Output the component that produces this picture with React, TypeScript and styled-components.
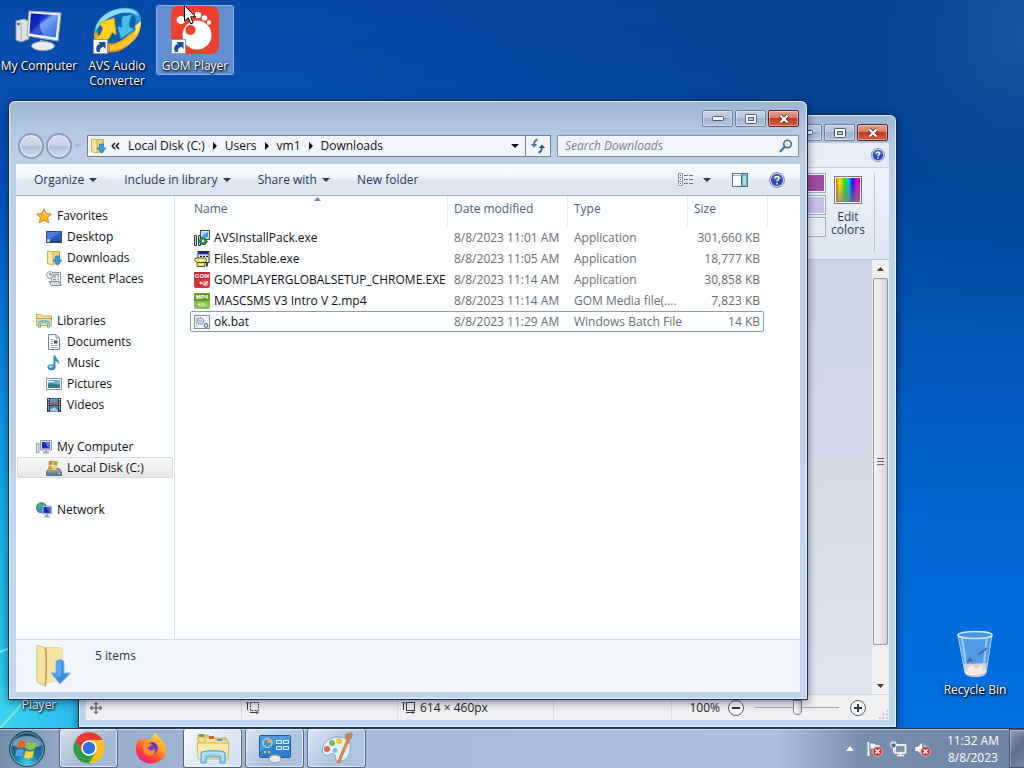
import React from "react";
import styled, { createGlobalStyle, css } from "styled-components";

const App = () => (
    <>
        <GlobalStyle />
        <Screen>
            <Desktop>
                <LightStreaks viewBox="0 0 80 160">
                    <path d="M0 84C30 74 44 56 60 30" fill="none" stroke="#a5f0f6" strokeWidth="2" opacity="0.800" />
                    <path d="M0 160C20 140 36 120 52 90" fill="none" stroke="#a8f0b0" strokeWidth="2" opacity="0.800" />
                    <path d="M0 120C24 108 50 112 80 130V160H0Z" fill="#5fe2ee" opacity="0.250" />
                </LightStreaks>
                <Shortcut $left="1px" $top="6px">
                    <ComputerIcon />
                    <ShortcutLabel>My Computer</ShortcutLabel>
                </Shortcut>
                <Shortcut $left="79px" $top="6px">
                    <AvsIcon />
                    <ShortcutLabel>AVS Audio<br />Converter</ShortcutLabel>
                </Shortcut>
                <Shortcut $left="157px" $top="6px" $selected>
                    <GomIcon />
                    <ShortcutLabel>GOM Player</ShortcutLabel>
                </Shortcut>
                <Shortcut $left="1px" $top="645px">
                    <GomIcon />
                    <ShortcutLabel>Player</ShortcutLabel>
                </Shortcut>
                <Shortcut $right="11px" $top="630px">
                    <RecycleIcon />
                    <ShortcutLabel>Recycle Bin</ShortcutLabel>
                </Shortcut>

                <PaintWindow />
                <ExplorerWindow />
                <Pointer viewBox="0 0 12 20">
                    <path d="M0.500 0.500V16.200L4.200 12.700L6.800 18.800L9.200 17.800L6.700 11.800H11.700Z" fill="#fff" stroke="#000" />
                </Pointer>
            </Desktop>
            <Taskbar />
        </Screen>
    </>
);

export default App;

/* ---------- explorer ---------- */

const navGroups = [
    {
        title: "Favorites",
        icon: <StarIcon />,
        items: [
            { text: "Desktop", icon: <DesktopIcon /> },
            { text: "Downloads", icon: <DownloadsIcon /> },
            { text: "Recent Places", icon: <RecentIcon /> },
        ],
    },
    {
        title: "Libraries",
        icon: <LibrariesIcon />,
        items: [
            { text: "Documents", icon: <DocumentIcon /> },
            { text: "Music", icon: <MusicIcon /> },
            { text: "Pictures", icon: <PictureIcon /> },
            { text: "Videos", icon: <VideoIcon /> },
        ],
    },
    {
        title: "My Computer",
        icon: <SmallComputerIcon />,
        items: [{ text: "Local Disk (C:)", icon: <DiskIcon />, active: true }],
    },
    { title: "Network", icon: <NetworkIcon />, items: [] },
];

const files = [
    { name: "AVSInstallPack.exe", date: "8/8/2023 11:01 AM", type: "Application", size: "301,660 KB", icon: <InstallerIcon /> },
    { name: "Files.Stable.exe", date: "8/8/2023 11:05 AM", type: "Application", size: "18,777 KB", icon: <ArchiveIcon /> },
    { name: "GOMPLAYERGLOBALSETUP_CHROME.EXE", date: "8/8/2023 11:14 AM", type: "Application", size: "30,858 KB", icon: <GomSetupIcon /> },
    { name: "MASCSMS V3 Intro V 2.mp4", date: "8/8/2023 11:14 AM", type: "GOM Media file(....", size: "7,823 KB", icon: <Mp4Icon /> },
    { name: "ok.bat", date: "8/8/2023 11:29 AM", type: "Windows Batch File", size: "14 KB", icon: <BatchIcon />, focused: true },
];

function ExplorerWindow() {
    return (
        <ExplorerFrame>
            <Caption>
                <CaptionButtons />
            </Caption>
            <NavRow>
                <TravelButtons>
                    <TravelButton aria-label="Back" />
                    <TravelButton aria-label="Forward" />
                    <Caret $faded />
                </TravelButtons>
                <AddressBar>
                    <DownloadsIcon />
                    <Chevrons viewBox="0 0 9 8">
                        <path d="M4 1L1.200 4L4 7M8 1L5.200 4L8 7" fill="none" stroke="#111" strokeWidth="1.400" />
                    </Chevrons>
                    {["Local Disk (C:)", "Users", "vm1", "Downloads"].map((crumb, i) => (
                        <React.Fragment key={crumb}>
                            {i > 0 && <CrumbArrow viewBox="0 0 4 8"><path d="M0 0L4 4L0 8Z" fill="#111" /></CrumbArrow>}
                            <Crumb href="#">{crumb}</Crumb>
                        </React.Fragment>
                    ))}
                    <AddressEnd>
                        <AddressButton aria-label="Previous locations"><Caret /></AddressButton>
                        <RefreshButton aria-label="Refresh">
                            <svg width="16" height="16" viewBox="0 0 16 16">
                                <path d="M7.500 1.500C5 2 4 3.500 4 7" fill="none" stroke="#3f78a8" strokeWidth="1.800" />
                                <path d="M0.800 6H7.200L4 9.500Z" fill="#3f78a8" />
                                <path d="M8.500 14.500C11 14 12 12.500 12 9" fill="none" stroke="#2b5674" strokeWidth="1.800" />
                                <path d="M8.800 10H15.200L12 6.500Z" fill="#2b5674" />
                            </svg>
                        </RefreshButton>
                    </AddressEnd>
                </AddressBar>
                <SearchBox>
                    <SearchInput type="text" aria-label="Search Downloads" placeholder="Search Downloads" />
                    <svg width="14" height="14" viewBox="0 0 14 14">
                        <circle cx="8.500" cy="5" r="3.800" fill="#e6f0fa" stroke="#4a6f96" strokeWidth="1.600" />
                        <path d="M5.600 8L1.500 12.300" stroke="#4a6f96" strokeWidth="2.200" strokeLinecap="round" />
                    </svg>
                </SearchBox>
            </NavRow>

            <Toolbar>
                <ToolButton>Organize<Caret $soft /></ToolButton>
                <ToolButton>Include in library<Caret $soft /></ToolButton>
                <ToolButton>Share with<Caret $soft /></ToolButton>
                <ToolButton>New folder</ToolButton>
                <ToolbarEnd>
                    <ToolButton aria-label="Change your view">
                        <svg width="16" height="14" viewBox="0 0 16 14">
                            <path d="M0.500 0.500H4.500V12.500H0.500ZM0.500 4.500H4.500M0.500 8.500H4.500" fill="#fff" stroke="#8a98aa" />
                            <path d="M2 2.500H3M2 6.500H3M2 10.500H3" stroke="#3d5878" />
                            <path d="M6 2.500H10M11 2.500H15M6 6.500H10M11 6.500H15M6 10.500H10M11 10.500H15" stroke="#66788e" />
                        </svg>
                    </ToolButton>
                    <ToolButton aria-label="More options"><Caret $soft /></ToolButton>
                    <ToolButton aria-label="Show the preview pane">
                        <svg width="16" height="14" viewBox="0 0 16 14">
                            <rect x="0.500" y="0.500" width="15" height="13" fill="#fff" stroke="#4c7188" />
                            <path d="M1 2.500H9" stroke="#9bb8c8" />
                            <rect x="9" y="1" width="6" height="12" fill="#6fb5c8" />
                            <rect x="11" y="3" width="3" height="9" fill="#a9dbe4" />
                            <path d="M9.500 1V13" stroke="#4c7188" />
                        </svg>
                    </ToolButton>
                    <ToolButton aria-label="Get help"><HelpIcon /></ToolButton>
                </ToolbarEnd>
            </Toolbar>

            <Body>
                <NavPane aria-label="Folders">
                    {navGroups.map(group => (
                        <NavGroup key={group.title}>
                            <NavItem href="#">{group.icon}{group.title}</NavItem>
                            {group.items.map((item: { text: string; icon: React.ReactNode; active?: boolean }) => (
                                <NavItem href="#" key={item.text} $nested $active={item.active}>
                                    {item.icon}{item.text}
                                </NavItem>
                            ))}
                        </NavGroup>
                    ))}
                </NavPane>
                <FilePane>
                    <FileTable>
                        <colgroup>
                            <Col $width="260px" />
                            <Col $width="120px" />
                            <Col $width="120px" />
                            <Col $width="80px" />
                        </colgroup>
                        <thead>
                            <tr>
                                <HeadCell>
                                    Name
                                    <SortMark viewBox="0 0 7 4"><path d="M0 4L3.500 0L7 4Z" fill="#7b8794" /></SortMark>
                                </HeadCell>
                                <HeadCell>Date modified</HeadCell>
                                <HeadCell>Type</HeadCell>
                                <HeadCell>Size</HeadCell>
                            </tr>
                        </thead>
                        <tbody>
                            {files.map(file => (
                                <FileRow key={file.name} $focused={file.focused}>
                                    <NameCell><FileName>{file.icon}{file.name}</FileName></NameCell>
                                    <Cell>{file.date}</Cell>
                                    <Cell>{file.type}</Cell>
                                    <Cell $right>{file.size}</Cell>
                                </FileRow>
                            ))}
                        </tbody>
                    </FileTable>
                </FilePane>
            </Body>

            <Details>
                <BigFolderIcon />
                <span>5 items</span>
            </Details>
        </ExplorerFrame>
    );
}

/* ---------- paint ---------- */

function PaintWindow() {
    return (
        <PaintFrame>
            <Caption>
                <CaptionButtons />
            </Caption>
            <TabStrip>
                <PlainButton aria-label="Help"><HelpIcon $size="14px" /></PlainButton>
            </TabStrip>
            <Ribbon>
                <Swatches>
                    <Swatch aria-label="Purple" $color="#a349a4" />
                    <Swatch aria-label="Lavender" $color="#c8bfe7" />
                    <Swatch aria-label="Custom color" $color="#e4ecf7" />
                </Swatches>
                <EditColors>
                    <Rainbow />
                    Edit colors
                </EditColors>
                <RibbonDivider />
            </Ribbon>
            <CanvasArea>
                <ScrollBar>
                    <ScrollArrow viewBox="0 0 17 17"><path d="M5 11L8.500 7L12 11Z" fill="#444" /></ScrollArrow>
                    <ScrollThumb>
                        <svg width="7" height="8" viewBox="0 0 7 8">
                            <path d="M0 0.500H7M0 3.500H7M0 6.500H7" stroke="#666" />
                        </svg>
                    </ScrollThumb>
                    <ScrollArrow viewBox="0 0 17 17"><path d="M5 7L8.500 11L12 7Z" fill="#444" /></ScrollArrow>
                </ScrollBar>
            </CanvasArea>
            <StatusBar>
                <StatusCell $width="156px">
                    <svg width="12" height="12" viewBox="0 0 12 12">
                        <path d="M6 0.500V11.500M0.500 6H11.500" stroke="#333b48" />
                        <path d="M4 2.500L6 0.500L8 2.500M4 9.500L6 11.500L8 9.500M2.500 4L0.500 6L2.500 8M9.500 4L11.500 6L9.500 8" fill="none" stroke="#333b48" />
                    </svg>
                </StatusCell>
                <StatusCell $width="156px"><SizeIcon $dashed /></StatusCell>
                <StatusCell $width="156px"><SizeIcon />614 × 460px</StatusCell>
                <StatusCell $width="118px" />
                <ZoomBar>
                    100%
                    <RoundButton aria-label="Zoom out">
                        <svg width="8" height="8" viewBox="0 0 8 8"><path d="M0 4H8" stroke="#333b48" strokeWidth="2" /></svg>
                    </RoundButton>
                    <ZoomSlider type="range" aria-label="Zoom" defaultValue={50} />
                    <RoundButton aria-label="Zoom in">
                        <svg width="8" height="8" viewBox="0 0 8 8"><path d="M0 4H8M4 0V8" stroke="#333b48" strokeWidth="2" /></svg>
                    </RoundButton>
                </ZoomBar>
                <Grip viewBox="0 0 10 10">
                    <path d="M8 0H10V2H8ZM4 4H6V6H4ZM8 4H10V6H8ZM0 8H2V10H0ZM4 8H6V10H4ZM8 8H10V10H8Z" fill="#b8c0cc" />
                </Grip>
            </StatusBar>
        </PaintFrame>
    );
}

function CaptionButtons() {
    return (
        <>
            <CaptionButton aria-label="Minimize">
                <svg width="12" height="5" viewBox="0 0 12 5"><rect x="0.500" y="0.500" width="11" height="4" rx="1" fill="#fff" stroke="#4b5a70" /></svg>
            </CaptionButton>
            <CaptionButton aria-label="Maximize">
                <svg width="12" height="10" viewBox="0 0 12 10">
                    <rect x="0.500" y="0.500" width="11" height="9" rx="1" fill="#fff" stroke="#4b5a70" />
                    <rect x="3.500" y="3.500" width="5" height="3" fill="#b8cade" stroke="#4b5a70" />
                </svg>
            </CaptionButton>
            <CaptionButton aria-label="Close" $close>
                <svg width="12" height="10" viewBox="0 0 12 10">
                    <path d="M2.500 1.500L9.500 8.500M9.500 1.500L2.500 8.500" stroke="#5c2b2b" strokeWidth="4" />
                    <path d="M2.500 1.500L9.500 8.500M9.500 1.500L2.500 8.500" stroke="#fff" strokeWidth="2.400" />
                </svg>
            </CaptionButton>
        </>
    );
}

/* ---------- taskbar ---------- */

function Taskbar() {
    return (
        <Bar>
            <StartButton aria-label="Start"><StartOrb /></StartButton>
            <TaskButton aria-label="Google Chrome" $state="open"><ChromeLogo /></TaskButton>
            <TaskButton aria-label="Firefox" $state="pinned"><FirefoxLogo /></TaskButton>
            <TaskButton aria-label="Windows Explorer" $state="active"><ExplorerLogo /></TaskButton>
            <TaskButton aria-label="Control Panel" $state="open"><ControlPanelLogo /></TaskButton>
            <TaskButton aria-label="Paint" $state="open"><PaintLogo /></TaskButton>
            <Tray>
                <PlainButton aria-label="Show hidden icons">
                    <svg width="8" height="5" viewBox="0 0 8 5"><path d="M0 5L4 0L8 5Z" fill="#fff" /></svg>
                </PlainButton>
                <TrayIcons>
                    <TraySvg viewBox="0 0 17 16">
                        <path d="M2.500 1V15" stroke="#fff" strokeWidth="2" />
                        <path d="M4 2H8L10 3.500H14V9H9L7.500 8H4Z" fill="#e9eef5" stroke="#4a5a70" strokeWidth="0.500" />
                        <TrayError />
                    </TraySvg>
                    <TraySvg viewBox="0 0 17 16">
                        <rect x="5" y="4" width="10.500" height="8" fill="#7d93ae" stroke="#fff" strokeWidth="1.600" />
                        <path d="M7 14.500H14M10.500 12V14.500" stroke="#fff" strokeWidth="1.600" />
                        <path d="M1 2H6V5.500L4.500 7H2.500L1 5.500ZM3.500 7V11H5M2.200 0V2M4.800 0V2" fill="#52657f" stroke="#fff" />
                    </TraySvg>
                    <TraySvg viewBox="0 0 17 16">
                        <path d="M1 5.500H4L8.500 1V15L4 10.500H1Z" fill="#fff" stroke="#5d6d82" strokeWidth="0.500" />
                        <path d="M10.500 4C12 6 12 8 11 10" fill="none" stroke="#fff" />
                        <TrayError />
                    </TraySvg>
                </TrayIcons>
                <Clock>11:32 AM<br />8/8/2023</Clock>
            </Tray>
            <ShowDesktop aria-label="Show desktop" />
        </Bar>
    );
}

function TrayError() {
    return (
        <>
            <circle cx="11.500" cy="10.500" r="4.800" fill="#d2322a" stroke="#f3c7c2" strokeWidth="0.800" />
            <path d="M9.500 8.500L13.500 12.500M13.500 8.500L9.500 12.500" stroke="#fff" strokeWidth="1.600" />
        </>
    );
}

/* ---------- desktop drawings ---------- */

function ArrowBadge() {
    return (
        <>
            <rect x="0.500" y="33.500" width="14" height="14" fill="#f4f7fb" stroke="#8b98a8" />
            <path d="M4 46C2 41 4.500 38.500 7 38L5.500 36H12.500V43L10.500 40.800C7.500 41.500 6.500 43.500 7 46Z" fill="#1d4c9c" />
        </>
    );
}

function ComputerIcon() {
    return (
        <BigSvg viewBox="0 0 48 48">
            <defs>
                <linearGradient id="screen" x1="0" y1="0" x2="1" y2="1">
                    <stop offset="0" stopColor="#0a18b0" />
                    <stop offset="0.350" stopColor="#1b3fd8" />
                    <stop offset="0.450" stopColor="#78a8f4" />
                    <stop offset="1" stopColor="#2a62de" />
                </linearGradient>
            </defs>
            <path d="M1 15L9 13L14 15V33L6 36L1 34Z" fill="#dfe3e6" stroke="#8d979f" />
            <path d="M6 16V35" stroke="#a9b3ba" />
            <circle cx="3.500" cy="18" r="1.200" fill="#38414a" />
            <path d="M25 34L31 35L33 39H24Z" fill="#b8c0c6" />
            <ellipse cx="28" cy="40" rx="11.500" ry="4.500" fill="#e9edef" stroke="#98a3ab" />
            <path d="M14 5L46 7L43 35L12 30Z" fill="#eceff1" stroke="#9aa4ad" />
            <path d="M16 7.500L43.500 9.200L40.700 31.500L14.500 27.500Z" fill="url(#screen)" />
            <path d="M16 7.500L27 8.200C23 14 24 22 29 29.500L14.500 27.500Z" fill="#0a16a8" opacity="0.550" />
        </BigSvg>
    );
}

function AvsIcon() {
    return (
        <BigSvg viewBox="0 0 48 48">
            <defs>
                <linearGradient id="avsRing" x1="0" y1="0" x2="0" y2="1">
                    <stop offset="0" stopColor="#3fb2e8" />
                    <stop offset="0.500" stopColor="#187fc4" />
                    <stop offset="0.620" stopColor="#f9a51c" />
                    <stop offset="1" stopColor="#f08a10" />
                </linearGradient>
            </defs>
            <path d="M20 4C34 -1 47 2 48 13C49 26 37 43 22 46C10 48 2 42 1 31C0 20 6 9 20 4Z" fill="url(#avsRing)" />
            <path d="M22 8C33 4 43 7 43 14C41 24 33 34 22 37C12 39 5 35 5 27C6 18 12 11 22 8Z" fill="#0f5fae" />
            <path d="M2 26C3 15 11 7 22 4C34 1 43 3 46 10C38 5 28 6 20 10C11 14 5 20 2 26Z" fill="#8bdcf7" />
            <path d="M17 40C29 37 40 30 48 16C48 23 46 28 43 32C36 40 27 44 17 45Z" fill="#fcc52b" />
            <path d="M42 20L48 15C47 22 44 27 41 30C43 26 43 23 42 20Z" fill="#fde96a" />
            <path d="M6 17L21 12L23 29L19 26C17 32 13 36 8 38L2 33C6 31 9 27 10 22Z" fill="#ffd21f" stroke="#e3a80c" />
            <path d="M30 10L40 8C37 13 36 17 37 21L42 23L28 33L24 20L29 21C28 17 28 13 30 10Z" fill="#48bdf0" stroke="#157ab8" />
            <ArrowBadge />
        </BigSvg>
    );
}

function GomIcon() {
    return (
        <BigSvg viewBox="0 0 48 48">
            <rect x="0" y="0" width="48" height="48" rx="8" fill="#ee3f2d" />
            <circle cx="26" cy="29" r="14.500" fill="#fff" />
            <circle cx="19.500" cy="24" r="5" fill="#ee3f2d" />
            <ellipse cx="10" cy="14" rx="4.500" ry="4" fill="#fff" />
            <circle cx="18" cy="9" r="4" fill="#fff" />
            <circle cx="27" cy="9" r="3.200" fill="#fff" />
            <circle cx="33.500" cy="12" r="2.800" fill="#fff" />
            <circle cx="38" cy="16.500" r="2.200" fill="#fff" />
            <ArrowBadge />
        </BigSvg>
    );
}

function RecycleIcon() {
    return (
        <BigSvg viewBox="0 0 48 48">
            <path d="M7 5H41L35 43C33 48 16 48 14 43Z" fill="#88bdec" opacity="0.600" />
            <path d="M12 34L36 33L35 43C33 48 16 48 14 43Z" fill="#d9cfc6" />
            <path d="M14 41L20 35L25 39L31 34L35 41C33 46 16 46 14 43Z" fill="#f4ece2" />
            <path d="M11 8L16 42M36 8L32 42" stroke="#b9ddf8" strokeWidth="2" opacity="0.700" />
            <path d="M36 18L27 25" stroke="#3f63bd" strokeWidth="1.600" />
            <path d="M18 28L21 31M16 32L20 29" stroke="#5f4fc0" strokeWidth="2" />
            <path d="M7 5L14 43C16 48 33 48 35 43L41 5" fill="none" stroke="#a9d3f2" />
            <ellipse cx="24" cy="5" rx="17" ry="3.500" fill="#4796dc" stroke="#cfe6f5" strokeWidth="1.600" />
        </BigSvg>
    );
}

/* ---------- 16px drawings ---------- */

function StarIcon() {
    return (
        <SmallSvg viewBox="0 0 16 16">
            <path d="M8 0.700L10.200 5.500L15.400 6.100L11.500 9.600L12.700 14.900L8 12.200L3.300 14.900L4.500 9.600L0.600 6.100L5.800 5.500Z" fill="#fbb52d" stroke="#d98a17" />
            <path d="M8 2.800L9.500 6.300L12.800 6.800L8 8Z" fill="#fde08a" />
        </SmallSvg>
    );
}

function DesktopIcon() {
    return (
        <SmallSvg viewBox="0 0 16 16">
            <rect x="0.500" y="2.500" width="15" height="11" fill="#2b58c4" stroke="#3b4a66" />
            <path d="M1 3H15L6 9L1 13Z" fill="#5c88de" opacity="0.700" />
            <path d="M1 12H15V13H1Z" fill="#26355a" />
            <rect x="1" y="10" width="3" height="3" fill="#8fd0f4" />
        </SmallSvg>
    );
}

function DownloadsIcon() {
    return (
        <SmallSvg viewBox="0 0 16 16">
            <path d="M6 1.500H13.500V14H6Z" fill="#eed47c" stroke="#c9a94a" />
            <path d="M1.500 0.800L7 2V15.200L1.500 13.500Z" fill="#f8e6a4" stroke="#cdae52" />
            <path d="M9.500 6H13.500V10H15.800L11.500 15.300L7.200 10H9.500Z" fill="#3b9ae0" stroke="#1a6eb4" strokeWidth="0.700" />
        </SmallSvg>
    );
}

function RecentIcon() {
    return (
        <SmallSvg viewBox="0 0 16 16">
            <path d="M5.500 1.500H14.500V12.500H5.500Z" fill="#f2f3f3" stroke="#8e9798" />
            <path d="M7 5.500H10M11.500 5.500H13M7 8.500H10M11.500 8.500H13M8 3.500H13" stroke="#8a9aa2" strokeWidth="1.400" />
            <path d="M3 10.500H13L15.500 14.500H5.500Z" fill="#d9dddd" stroke="#858f90" />
            <circle cx="4" cy="4" r="3.400" fill="#f4f7f7" stroke="#8e9798" />
            <path d="M4 2V4H6" fill="none" stroke="#555f60" />
        </SmallSvg>
    );
}

function LibrariesIcon() {
    return (
        <SmallSvg viewBox="0 0 16 16">
            <path d="M0.500 1.500H5L6.500 3H15.500V12.500H0.500Z" fill="#f3df94" stroke="#c8a956" />
            <path d="M1 5.500H15" stroke="#8fb05b" />
            <path d="M3.500 14.500V10C3.500 8 12.500 8 12.500 10V14.500" fill="none" stroke="#4fa6cc" strokeWidth="2.600" />
            <path d="M3.500 14V10C3.500 8.500 12.500 8.500 12.500 10V14" fill="none" stroke="#a7dcf0" />
        </SmallSvg>
    );
}

function DocumentIcon() {
    return (
        <SmallSvg viewBox="0 0 16 16">
            <path d="M2.500 0.500H10L13.500 4V15.500H2.500Z" fill="#fdfdfd" stroke="#7c858e" />
            <path d="M10 0.500V4H13.500" fill="none" stroke="#7c858e" />
            <path d="M4.500 5.500H8M4.500 7.500H7M4.500 9.500H7M4.500 11.500H11.500M4.500 13.500H11.500" stroke="#9aa5b0" />
            <rect x="8" y="6.500" width="3.500" height="3" fill="#3f4f60" />
        </SmallSvg>
    );
}

function MusicIcon() {
    return (
        <SmallSvg viewBox="0 0 16 16">
            <path d="M7.500 0.500H9.500C9.500 4 14.500 5 13 10C12.600 7.500 11 6.500 9.500 6.300V12H7.500Z" fill="#2f8bd0" />
            <ellipse cx="5.500" cy="12.300" rx="4" ry="3" fill="#2f8bd0" />
            <ellipse cx="4.800" cy="11.600" rx="2" ry="1.300" fill="#9cd4f4" />
        </SmallSvg>
    );
}

function PictureIcon() {
    return (
        <SmallSvg viewBox="0 0 16 16">
            <rect x="0.500" y="2.500" width="15" height="11" fill="#fff" stroke="#8a959f" />
            <rect x="2" y="4" width="12" height="8" fill="#62b6e4" />
            <path d="M2 8C5 5 7 9 14 8.500V12H2Z" fill="#2d7f86" />
            <path d="M2 5H8V6.500H2Z" fill="#d8f0fa" />
        </SmallSvg>
    );
}

function VideoIcon() {
    return (
        <SmallSvg viewBox="0 0 16 16">
            <rect x="1" y="1" width="14" height="14" fill="#27343d" />
            <path d="M2.500 2V14.500M13.500 2V14.500" stroke="#e7edf1" strokeWidth="1.200" strokeDasharray="1.200 1.200" />
            <rect x="4" y="1.500" width="8" height="6" fill="#4f9fd6" />
            <rect x="4" y="8.500" width="8" height="6" fill="#3f7fb4" />
            <path d="M4 7L7 4L9 6L12 3V7.500H4Z" fill="#b05a50" />
            <path d="M4 13L8 10L12 13V14.500H4Z" fill="#a9cfe6" />
        </SmallSvg>
    );
}

function SmallComputerIcon() {
    return (
        <SmallSvg viewBox="0 0 16 16">
            <path d="M0.500 4.500H3V13.500H0.500Z" fill="#e2e6e8" stroke="#959ea6" />
            <path d="M4.500 1.500H15.500V11H4.500Z" fill="#dfe3ee" stroke="#8f98ae" />
            <path d="M6 3H14V9.500H6Z" fill="#1b2bb4" />
            <path d="M9 3H14V9.500C11 8 10 6 9 3Z" fill="#5575dc" />
            <path d="M7 13.500H13M10 11V13" stroke="#a3abb4" strokeWidth="2" />
        </SmallSvg>
    );
}

function DiskIcon() {
    return (
        <SmallSvg viewBox="0 0 16 16">
            <path d="M2.500 8.500H13L15.500 12V15.500H0.500V12Z" fill="#8c9aa6" stroke="#65727e" />
            <path d="M1 12.500H15V15H1Z" fill="#5b7ea6" />
            <path d="M3 1L7 0.500L6 5L2.500 5.500Z" fill="#d08a35" />
            <path d="M7.500 0.700L12 1.500L11 5.500L7 5Z" fill="#96b52e" />
            <path d="M2.300 6L6 5.700L5.500 10L2 10Z" fill="#d0a838" />
            <path d="M6.700 5.800L11 6.200L10.500 10H6Z" fill="#f5cf3c" />
            <rect x="12" y="13" width="2" height="1" fill="#9be06a" />
        </SmallSvg>
    );
}

function NetworkIcon() {
    return (
        <SmallSvg viewBox="0 0 16 16">
            <circle cx="5.500" cy="5.800" r="5.200" fill="#2f8ed2" stroke="#22689c" strokeWidth="0.600" />
            <path d="M1.500 3.500C3.500 0.500 6.500 1.500 6 3.500C5 5.500 3.500 5 3.500 8L1 6Z" fill="#54b848" />
            <path d="M7.500 1.500L10 4L8 5Z" fill="#63c656" />
            <path d="M6.500 4H15.500V12H6.500Z" fill="#cfd8ef" stroke="#7f8bb0" strokeWidth="0.600" />
            <path d="M7.500 5H14.500V11H7.500Z" fill="#1a2aae" />
            <path d="M11 5H14.500V11C12 9 11.500 8 11 5Z" fill="#4d6bd4" />
            <path d="M8.500 14.500H13.500M11 12V14" stroke="#97a3b8" strokeWidth="2" />
        </SmallSvg>
    );
}

function InstallerIcon() {
    return (
        <SmallSvg viewBox="0 0 16 16">
            <rect x="6.500" y="0.500" width="9" height="9" fill="#e3e3dc" stroke="#42484c" />
            <rect x="8" y="2" width="6" height="5.500" fill="#3fa2e8" />
            <path d="M8 2H14L8 6Z" fill="#9ad4f8" />
            <path d="M8 11.500H13.500L11 14.500H8Z" fill="#d9d9d0" stroke="#3c4246" />
            <path d="M0.500 5.500H2.500V15.500H0.500ZM4.500 5.500H6.500V15.500H4.500Z" fill="#cfd6d4" stroke="#333a40" />
            <circle cx="9" cy="11" r="3.500" fill="#2e9c4c" stroke="#1c5a30" strokeWidth="0.700" />
            <circle cx="9" cy="11" r="1.200" fill="#fff" />
        </SmallSvg>
    );
}

function ArchiveIcon() {
    return (
        <SmallSvg viewBox="0 0 16 16">
            <rect x="4" y="0.500" width="11" height="11" fill="#fff" stroke="#22262c" />
            <path d="M4.500 1H14.500V3.500H4.500Z" fill="#1a2db0" />
            <path d="M6 5.500H8M9 5.500H11M12 5.500H14" stroke="#222" strokeWidth="1.500" />
            <path d="M1.500 7H11.500L13 9L11 11.500H3L0.500 9Z" fill="#f2e36b" stroke="#3c3a1e" strokeWidth="0.800" />
            <path d="M3 11.500H11V15.500H3Z" fill="#e8d858" stroke="#3c3a1e" strokeWidth="0.800" />
            <path d="M5 9H9M5 13.500H9" stroke="#fffbd0" strokeWidth="1.200" />
            <path d="M13 11.500V15.500" stroke="#3c4650" strokeWidth="2" />
        </SmallSvg>
    );
}

function GomSetupIcon() {
    return (
        <SmallSvg viewBox="0 0 16 16">
            <rect width="16" height="16" rx="2" fill="#d8383a" />
            <rect width="16" height="7" rx="1" fill="#c02a2e" />
            <SvgText x="8" y="6" textAnchor="middle">GOM</SvgText>
            <path d="M3 9L9 14H4Z" fill="#8a2024" opacity="0.600" />
            <circle cx="7" cy="11" r="1.600" fill="#f3d6d4" />
            <circle cx="11.500" cy="11.500" r="2.800" fill="#f0968e" />
            <path d="M10 13L14 9" stroke="#fff" />
        </SmallSvg>
    );
}

function Mp4Icon() {
    return (
        <SmallSvg viewBox="0 0 16 16">
            <rect width="16" height="16" rx="2" fill="#8dbf57" />
            <rect width="16" height="8" rx="1" fill="#5f9a2d" />
            <SvgText x="8" y="6" textAnchor="middle">MP4</SvgText>
            <path d="M3 12C5 9 10 9 13 12C10 14 6 14 3 12Z" fill="#bfe09a" />
        </SmallSvg>
    );
}

function BatchIcon() {
    return (
        <SmallSvg viewBox="0 0 16 16">
            <rect x="0.500" y="1.500" width="15" height="13" fill="#f5f8fb" stroke="#7f8ea0" />
            <circle cx="6.500" cy="7" r="3.200" fill="#dfe8f1" stroke="#6a7f9a" strokeDasharray="1.200 0.800" strokeWidth="1.400" />
            <circle cx="6.500" cy="7" r="1" fill="#fff" stroke="#6a7f9a" strokeWidth="0.600" />
            <circle cx="12" cy="11.500" r="1.800" fill="#dfe8f1" stroke="#5d7390" strokeWidth="1.200" />
            <path d="M2.500 3V13" stroke="#b7c7d8" />
        </SmallSvg>
    );
}

function HelpIcon({ $size = "16px" }: { $size?: string }) {
    return (
        <HelpBadge $size={$size} viewBox="0 0 16 16">
            <circle cx="8" cy="8" r="7.400" fill="#dde3f0" stroke="#6d7ca0" strokeWidth="0.900" />
            <circle cx="8" cy="8" r="6" fill="#2949b4" />
            <path d="M3 6.500C4 3 12 3 13 6.500C10 8.500 6 8.500 3 6.500Z" fill="#6f8ae0" opacity="0.700" />
            <path d="M6 6.300C6 4 10 4 10 6.300C10 7.800 8 7.700 8 9.600M8 10.800V12.400" fill="none" stroke="#fff" strokeWidth="1.500" />
        </HelpBadge>
    );
}

function SizeIcon({ $dashed }: { $dashed?: boolean }) {
    return (
        <svg width="14" height="13" viewBox="0 0 14 13">
            <rect x="4.500" y="1.500" width="8" height="8" fill="none" stroke="#333b48" strokeDasharray={$dashed ? "2 1" : undefined} />
            <path d="M1.500 1V9M0 2.500L1.500 1L3 2.500M4 11.500H12M10.500 10L12 11.500L10.500 13" fill="none" stroke="#333b48" />
        </svg>
    );
}

function BigFolderIcon() {
    return (
        <svg width="36" height="42" viewBox="0 0 36 42">
            <path d="M9 2H25V35L9 39Z" fill="#ecd585" />
            <path d="M11 3H27V34L11 38Z" fill="#f5e4a6" />
            <path d="M1 0L9 3C11 5 10 36 9 41L1 37Z" fill="#f7e3a0" stroke="#dcbf6a" />
            <path d="M9 3C11 6 10.500 34 9 41" fill="none" stroke="#c19f48" strokeWidth="1.500" />
            <path d="M20 17C20 14 28 14 28 17V28H34.500L24 39L15 28H20Z" fill="#3492e0" stroke="#7fbdf0" />
            <path d="M21 17C22 15.500 24 15.500 25 16.500V31L22 33L18 29H21Z" fill="#6bb6f2" opacity="0.700" />
        </svg>
    );
}

/* ---------- taskbar drawings ---------- */

function StartOrb() {
    return (
        <svg width="38" height="38" viewBox="0 0 38 38">
            <defs>
                <radialGradient id="orb" cx="0.500" cy="0.900" r="0.850">
                    <stop offset="0" stopColor="#43d4ee" />
                    <stop offset="0.400" stopColor="#1c78a8" />
                    <stop offset="1" stopColor="#1d4668" />
                </radialGradient>
            </defs>
            <circle cx="19" cy="19" r="17.500" fill="url(#orb)" stroke="#24425c" />
            <circle cx="19" cy="19" r="16.300" fill="none" stroke="#a9cbe0" opacity="0.600" />
            <path d="M4 15C7 3 31 3 34 15C27 19 11 19 4 15Z" fill="#cfe2ef" opacity="0.500" />
            <path d="M10.500 11.500C13 10 15.500 10 18 11.500L16.500 18.500C14 17 11.500 17 9 18.500Z" fill="#e8622c" />
            <path d="M19.500 12C22 13.500 25 13.500 28.500 12L26.500 19C24 20.500 21 20.500 18 19Z" fill="#8cc63e" />
            <path d="M8.500 20C11 18.500 13.500 18.500 16 20L14.500 27C12 25.500 9.500 25.500 7 27Z" fill="#4aa4e4" />
            <path d="M17.500 20.500C20.500 22 23 22 26 20.500L24.500 27.500C21.500 29 19 29 16 27.500Z" fill="#fbd13c" />
        </svg>
    );
}

function ChromeLogo() {
    return (
        <svg width="32" height="32" viewBox="0 0 32 32">
            <circle cx="16" cy="16" r="15.500" fill="#fbc116" />
            <path d="M16 8H29.500A15.500 15.500 0 0 0 2.600 8.200L9.100 20L16 16Z" fill="#e53a2f" />
            <path d="M2.600 8.200A15.500 15.500 0 0 0 16 31.500L22.900 20L16 16L9.100 20Z" fill="#2f9e4a" />
            <circle cx="16" cy="16" r="7.800" fill="#fff" />
            <circle cx="16" cy="16" r="6.200" fill="#2b72e4" />
        </svg>
    );
}

function FirefoxLogo() {
    return (
        <svg width="32" height="32" viewBox="0 0 32 32">
            <defs>
                <linearGradient id="fox" x1="0.850" y1="0" x2="0.200" y2="1">
                    <stop offset="0" stopColor="#ffe83a" />
                    <stop offset="0.400" stopColor="#ff9a22" />
                    <stop offset="0.700" stopColor="#ff4438" />
                    <stop offset="1" stopColor="#e9168a" />
                </linearGradient>
            </defs>
            <path d="M4 6C5 7 6 8 7 8.500L10 5L11 9C14 7 16 8 17 7C17 4 19 1.500 21 0.500C21 5 29 7 31 16C32 25 25 31.500 16 31.500C7 31.500 0.500 25 1 17C1 12 3 10 4 6Z" fill="url(#fox)" />
            <circle cx="16" cy="17" r="6.500" fill="#7a3bd0" />
            <path d="M8 13C11 10 15 11 17 13C14 14 14 16 12 16C14 19 18 19 20 17C20 22 18 24 15 24C10 23.500 7 18 8 13Z" fill="#ff8a2a" />
            <path d="M16 10C21 10 24 14 22 19C21 15 19 12 16 11Z" fill="#5433c4" />
        </svg>
    );
}

function ExplorerLogo() {
    return (
        <svg width="34" height="32" viewBox="0 0 34 32">
            <path d="M2 3H12L14 6H30V22H2Z" fill="#f3dc84" stroke="#c8a850" />
            <path d="M3 2H8V5H3Z" fill="#4caf4f" />
            <path d="M9 5H18L20 8H32V20H9Z" fill="#f7e69c" stroke="#ceb05a" />
            <path d="M13 4H18V7H13Z" fill="#e0672f" />
            <path d="M21 7H26V9H21Z" fill="#4b8edb" />
            <path d="M1 11H33L32 27H2Z" fill="#f9eaa6" stroke="#d2b55f" />
            <path d="M5 31V21C5 18 29 18 29 21V31H24V25H10V31Z" fill="#8fd1ee" stroke="#4a9cc4" />
            <path d="M7 29V22C8 20.500 26 20.500 27 22V29" fill="none" stroke="#d5f0fb" />
        </svg>
    );
}

function ControlPanelLogo() {
    return (
        <svg width="34" height="32" viewBox="0 0 34 32">
            <rect x="1.500" y="3.500" width="31" height="22" rx="1" fill="#2f80c8" stroke="#1c5d9c" />
            <path d="M2 4H32V11C20 10 10 14 2 20Z" fill="#57a5e2" opacity="0.700" />
            <circle cx="9.500" cy="11" r="4.500" fill="#3f95d6" stroke="#dff1fb" />
            <path d="M9.500 11V6.500A4.500 4.500 0 0 1 14 11Z" fill="#f7a82c" />
            <path d="M18.500 8.500H23.500V11.500H18.500ZM25.500 8.500H30.500V11.500H25.500ZM18.500 14.500H23.500V17.500H18.500ZM25.500 14.500H30.500V17.500H25.500Z" fill="#3e90d4" stroke="#e6f4fd" />
            <path d="M6 20H8M10 20H12" stroke="#f5c95a" strokeWidth="2" />
            <ellipse cx="17" cy="27" rx="6" ry="4" fill="#e4e6e8" stroke="#9aa2a8" />
        </svg>
    );
}

function PaintLogo() {
    return (
        <svg width="34" height="32" viewBox="0 0 34 32">
            <path d="M16 5C26 4 32 10 30 18C29 26 24 30 18 29C14 28 17 24 14 22C11 20 9 25 5 23C-1 19 3 7 16 5Z" fill="#e3eff9" stroke="#7fa4c8" />
            <circle cx="7" cy="17" r="3" fill="#e06a4c" />
            <circle cx="12" cy="11" r="3" fill="#6fbf5c" />
            <circle cx="19" cy="9" r="3" fill="#f2c53d" />
            <circle cx="15" cy="18.500" r="2.500" fill="#7fb9e6" />
            <path d="M17 31L27 7L29.500 8L19.500 31Z" fill="#e08a3c" stroke="#b4672a" strokeWidth="0.500" />
            <path d="M26 7C23 3 26 1 32 0C33 3 33 6 30 8Z" fill="#b98658" />
        </svg>
    );
}

/* ---------- styles ---------- */

const GlobalStyle = createGlobalStyle`
    * {
        box-sizing: border-box;
    }

    body {
        margin: 0;
        overflow: hidden;
    }

    body, button, input {
        font-family: "Open Sans", "Noto Sans", sans-serif;
        font-size: 12px;
        line-height: 15px;
    }

    a {
        color: inherit;
        text-decoration: none;
    }
`;

const Screen = styled.div`
    display: flex;
    flex-direction: column;
    height: 100vh;
`;

const Desktop = styled.main`
    position: relative;
    flex: 1;
    overflow: hidden;
    background:
        radial-gradient(circle at 100% 5%, rgba(60, 130, 190, .3), transparent 14%),
        radial-gradient(ellipse 180px 520px at 0% 100%, #2fd0ee 0%, rgba(24, 176, 236, .9) 45%, transparent 100%),
        radial-gradient(ellipse at 100% 10%, rgba(0, 56, 120, .6), transparent 50%),
        linear-gradient(180deg, #084aa8 0%, #0453b8 25%, #0062cc 50%, #006fdf 100%);
`;

const LightStreaks = styled.svg`
    position: absolute;
    left: 0;
    bottom: 0;
    width: 80px;
    height: 160px;
`;

const Shortcut = styled.button<{ $left?: string; $right?: string; $top: string; $selected?: boolean }>`
    position: absolute;
    left: ${p => p.$left};
    right: ${p => p.$right};
    top: ${p => p.$top};
    display: flex;
    flex-direction: column;
    align-items: center;
    gap: 4px;
    width: 76px;
    padding: 0;
    border: 0;
    background: none;

    ${p => p.$selected && css`
        padding-bottom: 1px;
        border-radius: 2px;
        background: rgba(160, 190, 235, .6);
        box-shadow: 0 0 0 1px rgba(170, 205, 245, .8);
    `}
`;

const ShortcutLabel = styled.span`
    color: #fff;
    text-shadow: 1px 1px 2px #000, 0 1px 3px #000;
    white-space: nowrap;
`;

const BigSvg = styled.svg`
    width: 48px;
    height: 48px;
`;

const SmallSvg = styled.svg`
    flex: none;
    width: 16px;
    height: 16px;
`;

const HelpBadge = styled.svg<{ $size: string }>`
    width: ${p => p.$size};
    height: ${p => p.$size};
`;

const SvgText = styled.text`
    fill: #fff;
    font: 700 6px "Liberation Sans", sans-serif;
`;

const Pointer = styled.svg`
    position: absolute;
    left: 184px;
    top: 5px;
    width: 12px;
    height: 20px;
`;

const Frame = styled.section`
    position: absolute;
    display: flex;
    flex-direction: column;
    padding: 0 7px 7px;
    border: 1px solid #14293f;
    border-radius: 7px 7px 0 0;
    background: linear-gradient(180deg, #9db5d2 0, #b3c8e1 30px, #bfd3ea 70px, #bfd5ee 100%);
    box-shadow: inset 0 0 0 1px rgba(235, 248, 255, .85), 0 2px 8px rgba(0, 10, 50, .5);
`;

const ExplorerFrame = styled(Frame)`
    left: 8px;
    top: 100px;
    width: 800px;
    height: 600px;
`;

const PaintFrame = styled(Frame)`
    left: 78px;
    top: 114px;
    width: 819px;
    height: 614px;
`;

const Caption = styled.header`
    display: flex;
    flex: none;
    justify-content: flex-end;
    gap: 2px;
    height: 28px;
    padding: 9px 1px 0 0;
`;

const CaptionButton = styled.button<{ $close?: boolean }>`
    display: flex;
    align-items: center;
    justify-content: center;
    width: 31px;
    height: 17px;
    padding: 0;
    border: 1px solid ${p => (p.$close ? "#5c2028" : "#6d7f98")};
    border-radius: 2px;
    background: ${p => (p.$close
        ? "linear-gradient(180deg, #e3a08f 0, #d67a66 48%, #c23a22 50%, #d4603f 100%)"
        : "linear-gradient(180deg, #c3d3e5 0, #b5c8de 48%, #9db4cf 50%, #b4c9e0 100%)")};
    box-shadow: inset 0 0 0 1px rgba(255, 255, 255, .4);
`;

const NavRow = styled.div`
    display: flex;
    flex: none;
    align-items: center;
    gap: 6px;
    height: 35px;
    padding: 0 1px 2px 0;
`;

const TravelButtons = styled.div`
    display: flex;
    align-items: center;
    gap: 2px;
    width: 65px;
    padding-left: 2px;
`;

const TravelButton = styled.button`
    flex: none;
    width: 26px;
    height: 26px;
    padding: 0;
    border: 2px solid #8a9cb2;
    border-radius: 50%;
    background: linear-gradient(180deg, #d3e0ee 0, #c3d2e3 48%, #adc0d5 52%, #ccdcec 100%);
    box-shadow: inset 0 0 0 1px rgba(240, 248, 255, .7);
`;

const Caret = styled.i<{ $soft?: boolean; $faded?: boolean }>`
    display: inline-block;
    flex: none;
    border: 4px solid transparent;
    border-top-color: ${p => (p.$faded ? "#9fb3ca" : p.$soft ? "#2c3a54" : "#111")};
    border-bottom: 0;
`;

const AddressBar = styled.div`
    display: flex;
    flex: 1;
    align-items: center;
    gap: 8px;
    height: 22px;
    padding-left: 2px;
    border: 1px solid #6f8196;
    background: #f0f5fb;
`;

const Chevrons = styled.svg`
    width: 9px;
    height: 8px;
    margin-left: -3px;
`;

const Crumb = styled.a`
    color: #111;
`;

const CrumbArrow = styled.svg`
    width: 4px;
    height: 8px;
`;

const AddressEnd = styled.div`
    display: flex;
    align-self: stretch;
    margin-left: auto;
`;

const AddressButton = styled.button`
    display: flex;
    align-items: center;
    justify-content: center;
    width: 20px;
    padding: 0;
    border: 0;
    background: none;
`;

const RefreshButton = styled(AddressButton)`
    width: 25px;
    border-left: 1px solid #6f8196;
`;

const SearchBox = styled.label`
    display: flex;
    align-items: center;
    width: 242px;
    height: 22px;
    padding: 0 5px 0 7px;
    border: 1px solid #7f93ab;
    background: #f0f5fb;
`;

const SearchInput = styled.input`
    flex: 1;
    min-width: 0;
    padding: 0;
    border: 0;
    outline: 0;
    background: none;

    &::placeholder {
        color: #76818e;
        font-style: italic;
    }
`;

const Toolbar = styled.div`
    display: flex;
    flex: none;
    align-items: center;
    gap: 27px;
    height: 32px;
    padding: 0 15px 0 18px;
    border-bottom: 1px solid #a0aec4;
    background: linear-gradient(180deg, #fbfdff 0, #f1f6fc 40%, #dde7f4 55%, #dbe5f4 100%);
`;

const PlainButton = styled.button`
    display: flex;
    align-items: center;
    padding: 0;
    border: 0;
    background: none;
`;

const ToolButton = styled(PlainButton)`
    gap: 5px;
    color: #1e395b;
`;

const ToolbarEnd = styled.div`
    display: flex;
    align-items: center;
    gap: 21px;
    margin-left: auto;

    ${ToolButton}:nth-child(2) {
        margin-left: -12px;
    }
`;

const Body = styled.div`
    display: flex;
    flex: 1;
    min-height: 0;
    background: #fdfeff;
`;

const NavPane = styled.nav`
    display: flex;
    flex-direction: column;
    gap: 21px;
    width: 159px;
    padding: 9px 1px;
    border-right: 1px solid #d6e2f1;
`;

const NavGroup = styled.div`
    display: flex;
    flex-direction: column;
`;

const NavItem = styled.a<{ $nested?: boolean; $active?: boolean }>`
    display: flex;
    align-items: center;
    gap: 5px;
    height: 21px;
    padding-left: ${p => (p.$nested ? "28px" : "18px")};
    border: 1px solid transparent;
    border-radius: 2px;
    color: #111;
    white-space: nowrap;

    ${p => p.$active && css`
        border-color: #d9d9d9;
        background: linear-gradient(180deg, #fafafa, #e6e6e6);
    `}
`;

const FilePane = styled.div`
    flex: 1;
    padding-left: 13px;
`;

const FileTable = styled.table`
    table-layout: fixed;
    width: 580px;
    border-spacing: 0;
`;

const Col = styled.col<{ $width: string }>`
    width: ${p => p.$width};
`;

const HeadCell = styled.th`
    position: relative;
    height: 31px;
    padding: 0 6px 6px;
    border-right: 1px solid #e6ebf2;
    color: #4c607a;
    font-weight: 400;
    text-align: left;
`;

const SortMark = styled.svg`
    position: absolute;
    left: calc(50% - 4px);
    top: 1px;
    width: 7px;
    height: 4px;
`;

const FileRow = styled.tr<{ $focused?: boolean }>`
    position: relative;

    ${p => p.$focused && css`
        &::after {
            content: "";
            position: absolute;
            inset: 0 4px 0 2px;
            border: 1px solid #8a9db4;
            border-radius: 2px;
        }
    `}
`;

const Cell = styled.td<{ $right?: boolean }>`
    height: 21px;
    padding: 0 ${p => (p.$right ? "8px" : "0")} 0 6px;
    overflow: hidden;
    color: #6d6d6d;
    text-align: ${p => (p.$right ? "right" : "left")};
    white-space: nowrap;
`;

const NameCell = styled(Cell)`
    color: #111;
`;

const FileName = styled.span`
    display: flex;
    align-items: center;
    gap: 4px;
`;

const Details = styled.footer`
    display: flex;
    flex: none;
    gap: 23px;
    height: 53px;
    padding: 5px 20px;
    border-top: 1px solid #d4deec;
    background: #f1f5fc;
    color: #1e395b;

    span {
        padding-top: 3px;
    }
`;

const TabStrip = styled.div`
    display: flex;
    flex: none;
    align-items: center;
    justify-content: flex-end;
    height: 25px;
    padding-right: 4px;
    border-bottom: 1px solid #c5d3e6;
    background: #e4edf9;
`;

const Ribbon = styled.div`
    display: flex;
    flex: none;
    justify-content: flex-end;
    height: 92px;
    padding: 5px 14px 6px 0;
    border-bottom: 1px solid #b4c2d6;
    background: linear-gradient(180deg, #edf3fb, #dce7f5);
`;

const Swatches = styled.div`
    display: flex;
    flex-direction: column;
    gap: 2px;
`;

const Swatch = styled.button<{ $color: string }>`
    width: 20px;
    height: 20px;
    padding: 0;
    border: 1px solid #9aa8bc;
    background: ${p => p.$color};
    box-shadow: inset 0 0 0 1px #f4f8fd;
`;

const EditColors = styled(PlainButton)`
    flex-direction: column;
    gap: 6px;
    width: 44px;
    padding-top: 3px;
    color: #1e395b;
    line-height: 13px;
`;

const Rainbow = styled.span`
    flex: none;
    width: 28px;
    height: 28px;
    border: 1px solid #8c6f6f;
    background:
        linear-gradient(180deg, transparent 20%, rgba(128, 128, 128, .8)),
        linear-gradient(90deg, #ff3b00, #ffe800 18%, #1ee000 38%, #00c8f0 52%, #1a10e8 68%, #e000e8 84%, #ff0040);
    box-shadow: inset 0 0 0 1px #fff;
`;

const RibbonDivider = styled.i`
    width: 1px;
    margin-left: 4px;
    background: #b6c4d8;
`;

const CanvasArea = styled.div`
    display: flex;
    flex: 1;
    justify-content: flex-end;
    background: linear-gradient(180deg, #c8d3e4, #dce5f2);
`;

const ScrollBar = styled.div`
    display: flex;
    flex-direction: column;
    width: 17px;
    background: #f0f0f0;
`;

const ScrollArrow = styled.svg`
    flex: none;
    width: 17px;
    height: 17px;
`;

const ScrollThumb = styled.div`
    display: flex;
    flex: 1;
    align-items: center;
    justify-content: center;
    margin: 1px 1px 32px;
    border: 1px solid #979797;
    border-radius: 2px;
    background: linear-gradient(90deg, #f5f5f5, #e9e9eb 45%, #d0d2d6);
`;

const StatusBar = styled.footer`
    display: flex;
    flex: none;
    height: 26px;
    border-top: 1px solid #d0d5dd;
    background: #f0f0f1;
    color: #222;
`;

const StatusCell = styled.span<{ $width: string }>`
    display: flex;
    align-items: center;
    gap: 4px;
    width: ${p => p.$width};
    padding-left: 4px;
    border-right: 1px solid #d9dbdf;
`;

const ZoomBar = styled.div`
    display: flex;
    align-items: center;
    gap: 8px;
    margin-left: auto;
    padding-right: 13px;
`;

const RoundButton = styled.button`
    display: flex;
    align-items: center;
    justify-content: center;
    width: 16px;
    height: 16px;
    padding: 0;
    border: 1px solid #565d68;
    border-radius: 50%;
    background: #fafafa;
`;

const ZoomSlider = styled.input`
    appearance: none;
    width: 90px;
    height: 16px;
    margin: 0;
    background: linear-gradient(#a0a5ac, #a0a5ac) center / 84px 1px no-repeat;

    &::-webkit-slider-thumb {
        appearance: none;
        width: 9px;
        height: 15px;
        border: 1px solid #7a828c;
        border-radius: 1px 1px 5px 5px;
        background: linear-gradient(90deg, #fff, #cfd3d8);
    }
`;

const Grip = styled.svg`
    align-self: flex-end;
    width: 9px;
    height: 9px;
    margin: 0 1px 1px 0;
`;

const Bar = styled.footer`
    display: flex;
    flex: none;
    gap: 3px;
    height: 40px;
    border-top: 1px solid #24405e;
    background: linear-gradient(90deg, #788ea8 0, #93a9c4 6%, #a6bdda 30%, #a9c0dd 76%, #7890ae 84%, #6c84a2 100%);
    box-shadow: inset 0 1px 0 rgba(255, 255, 255, .45);
`;

const StartButton = styled(PlainButton)`
    justify-content: center;
    width: 54px;
    margin-right: 2px;
`;

const taskSurface = {
    pinned: "transparent",
    open: "linear-gradient(135deg, rgba(235, 243, 252, .75), rgba(185, 205, 230, .4) 60%)",
    active: "linear-gradient(135deg, #f4f8fd, #dce7f4 60%, #cfe0f2)",
};

const TaskButton = styled.button<{ $state: keyof typeof taskSurface }>`
    display: flex;
    align-items: center;
    justify-content: center;
    width: 59px;
    padding: 0;
    border: 1px solid ${p => (p.$state === "pinned" ? "transparent" : "#4d6784")};
    border-top: 0;
    border-radius: 3px;
    background: ${p => taskSurface[p.$state]};
    box-shadow: ${p => (p.$state === "pinned" ? "none" : "inset 0 0 0 1px rgba(245, 250, 255, .7)")};
`;

const Tray = styled.div`
    display: flex;
    align-items: center;
    gap: 12px;
    margin-left: auto;
    padding-right: 7px;
`;

const TrayIcons = styled.div`
    display: flex;
    gap: 7px;
`;

const TraySvg = styled.svg`
    width: 17px;
    height: 16px;
`;

const Clock = styled.time`
    padding-left: 4px;
    color: #fff;
    line-height: 17px;
    text-align: center;
`;

const ShowDesktop = styled.button`
    width: 15px;
    padding: 0;
    border: 1px solid #3f5570;
    border-right: 0;
    background: linear-gradient(135deg, #8fa2b8, #5c6f88 50%, #75899f);
    box-shadow: inset 1px 1px 0 rgba(255, 255, 255, .35);
`;
